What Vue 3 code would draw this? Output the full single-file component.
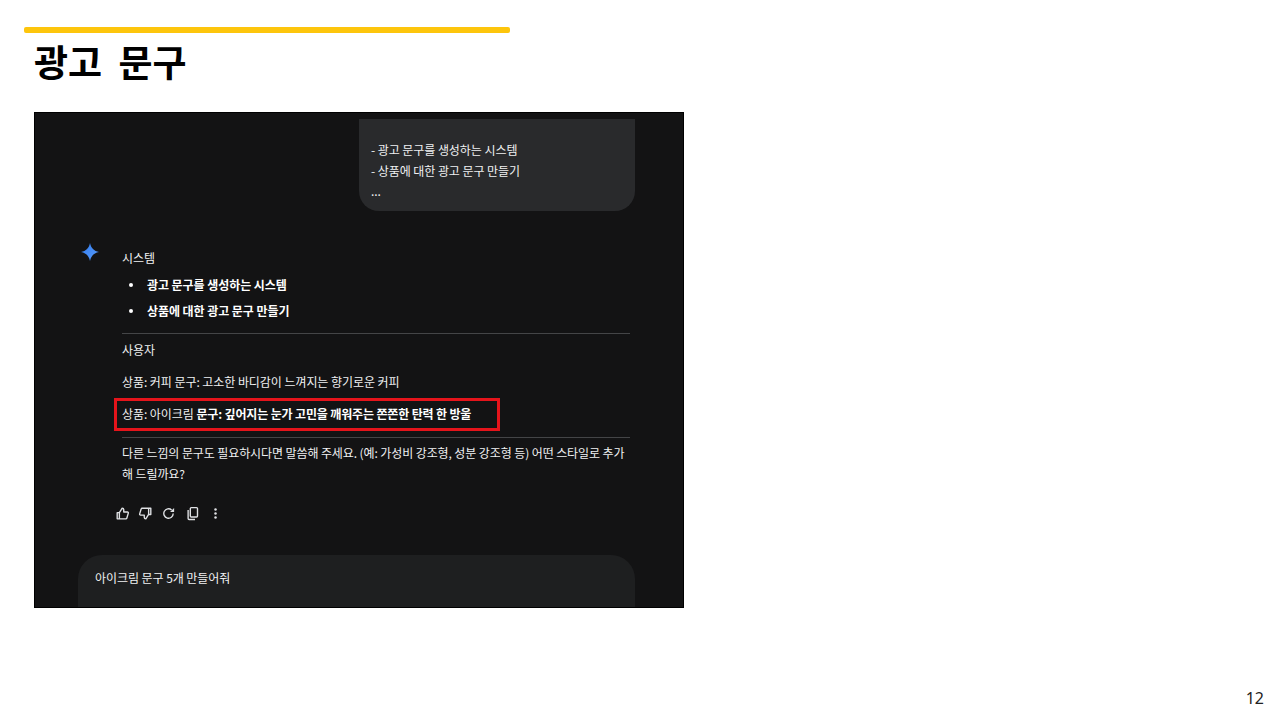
<script setup>
const bullets = ['광고 문구를 생성하는 시스템', '상품에 대한 광고 문구 만들기']
</script>

<template>
  <div class="slide">
    <div class="accent"></div>
    <h1 class="title">광고 문구</h1>
    <div class="shot">
      <div class="prev-bubble">
        <p>- 광고 문구를 생성하는 시스템</p>
        <p>- 상품에 대한 광고 문구 만들기</p>
        <p class="dots">...</p>
      </div>
      <div class="answer">
        <svg class="star" viewBox="0 0 20 20" width="20" height="20">
          <defs>
            <linearGradient id="sg" x1="0" y1="0" x2="1" y2="1">
              <stop offset="0" stop-color="#2f7bf0" />
              <stop offset="1" stop-color="#5b9cf8" />
            </linearGradient>
          </defs>
          <path d="M10 1C11 6 14 9 19 10C14 11 11 14 10 19C9 14 6 11 1 10C6 9 9 6 10 1Z" fill="url(#sg)" />
        </svg>
        <div class="body">
          <p class="label">시스템</p>
          <ul class="list">
            <li v-for="b in bullets" :key="b">{{ b }}</li>
          </ul>
          <hr class="rule first" />
          <p class="label user">사용자</p>
          <p class="line ex1">상품: 커피 문구: 고소한 바디감이 느껴지는 향기로운 커피</p>
          <p class="line ex2">
            상품: 아이크림 <b>문구: 깊어지는 눈가 고민을 깨워주는 쫀쫀한 탄력 한 방울</b>
            <span class="mark"></span>
          </p>
          <hr class="rule second" />
          <p class="para">다른 느낌의 문구도 필요하시다면 말씀해 주세요. (예: 가성비 강조형, 성분 강조형 등) 어떤 스타일로 추가<br />해 드릴까요?</p>
          <div class="actions">
            <svg viewBox="0 0 24 24" width="15" height="15"><path d="M7 10.5V20.5H3.5V10.5H7ZM7 10.5L11.5 3.5C13 3.5 14 4.5 14 6V9.5H20C21 9.5 21.6 10.4 21.3 11.4L19 19.2C18.8 20 18.2 20.5 17.3 20.5H7" /></svg>
            <svg viewBox="0 0 24 24" width="15" height="15"><path d="M17 13.5V3.5H20.5V13.5H17ZM17 13.5L12.5 20.5C11 20.5 10 19.5 10 18V14.5H4C3 14.5 2.4 13.6 2.7 12.6L5 4.8C5.2 4 5.8 3.5 6.7 3.5H17" /></svg>
            <svg viewBox="0 0 24 24" width="15" height="15"><path d="M19.5 12A7.5 7.5 0 1 1 17 6.4" /><path class="solid" d="M14.5 9.5H21V3Z" /></svg>
            <svg viewBox="0 0 24 24" width="15" height="15"><rect x="8.5" y="2.5" width="11.5" height="15" rx="1.5" /><path d="M5 6.5V20C5 20.8 5.6 21.5 6.5 21.5H16" /></svg>
            <svg class="kebab" viewBox="0 0 24 24" width="15" height="15"><circle class="solid" cx="12" cy="5.5" r="2" /><circle class="solid" cx="12" cy="12" r="2" /><circle class="solid" cx="12" cy="18.5" r="2" /></svg>
          </div>
        </div>
      </div>
      <div class="composer">아이크림 문구 5개 만들어줘</div>
    </div>
    <div class="page">12</div>
  </div>
</template>

<style>
html, body { margin: 0; background: #fff; }
</style>

<style scoped>
.slide {
  position: relative;
  width: 1280px;
  height: 720px;
  overflow: hidden;
  background: #fff;
  font-family: "Noto Sans CJK KR", "Noto Sans", sans-serif;
  padding-top: 27px;
  box-sizing: border-box;
}
p { margin: 0; }
.accent {
  width: 486px;
  height: 6px;
  margin-left: 24px;
  border-radius: 2px;
  background: #fdc50c;
}
.title {
  margin: 5px 0 0 34px;
  height: 46px;
  font-size: 37px;
  line-height: 46px;
  font-weight: 700;
  color: #000;
  word-spacing: 8px;
}
.shot {
  width: 650px;
  height: 496px;
  margin: 28px 0 0 34px;
  box-sizing: border-box;
  border: 1px solid #000;
  background: #131314;
  color: #f0f1f2;
  font-size: 12px;
  letter-spacing: -0.06px;
  overflow: hidden;
  padding-top: 6px;
}
.prev-bubble {
  width: 276px;
  height: 92px;
  margin-left: 324px;
  box-sizing: border-box;
  padding: 20px 12px 0;
  background: #292a2c;
  border-radius: 0 0 20px 20px;
  line-height: 21px;
}
.dots { margin-top: -1px; }
.answer {
  display: flex;
  margin: 32px 0 0 45px;
}
.star { flex: none; margin-top: -1px; }
.body {
  width: 508px;
  margin-left: 22px;
  padding-top: 4px;
}
.label { line-height: 21px; }
.list {
  list-style: none;
  margin: 4px 0 0;
  padding: 0;
  color: #fff;
  font-weight: 700;
}
.list li {
  position: relative;
  height: 26px;
  line-height: 26px;
  padding-left: 25px;
}
.list li::before {
  content: "";
  position: absolute;
  left: 7px;
  top: 11px;
  width: 4px;
  height: 4px;
  border-radius: 50%;
  background: #fff;
}
.rule {
  margin: 0;
  border: 0;
  height: 1px;
  background: #444547;
}
.rule.first { margin-top: 9px; }
.user { margin-top: 5px; }
.line { line-height: 20px; }
.ex1 { margin-top: 12px; }
.ex2 { margin-top: 12px; position: relative; }
.ex2 b { color: #fff; font-weight: 700; letter-spacing: -0.15px; }
.mark {
  position: absolute;
  left: -8px;
  top: -6px;
  width: 386px;
  height: 33px;
  box-sizing: border-box;
  border: 3px solid #e5141b;
}
.rule.second { margin-top: 13px; }
.para { margin-top: 5px; line-height: 20.5px; white-space: nowrap; letter-spacing: -0.1px; }
.actions {
  display: flex;
  gap: 8.2px;
  align-items: center;
  margin: 22px 0 0 -7px;
  height: 15px;
}
.actions svg {
  fill: none;
  stroke: #dfe1e4;
  stroke-width: 2.2;
  stroke-linejoin: round;
}
.actions .kebab { margin-left: 0; }
.actions .solid { fill: #dfe1e4; stroke: none; }
.composer {
  width: 557px;
  height: 60px;
  margin: 34px 0 0 43px;
  box-sizing: border-box;
  padding: 13px 17px 0;
  background: #1e1f20;
  border-radius: 24px 24px 0 0;
  line-height: 20px;
}
.page {
  position: absolute;
  right: 16px;
  top: 688px;
  font-family: "Noto Sans", sans-serif;
  font-size: 16px;
  line-height: 20px;
  color: #222;
}
</style>
